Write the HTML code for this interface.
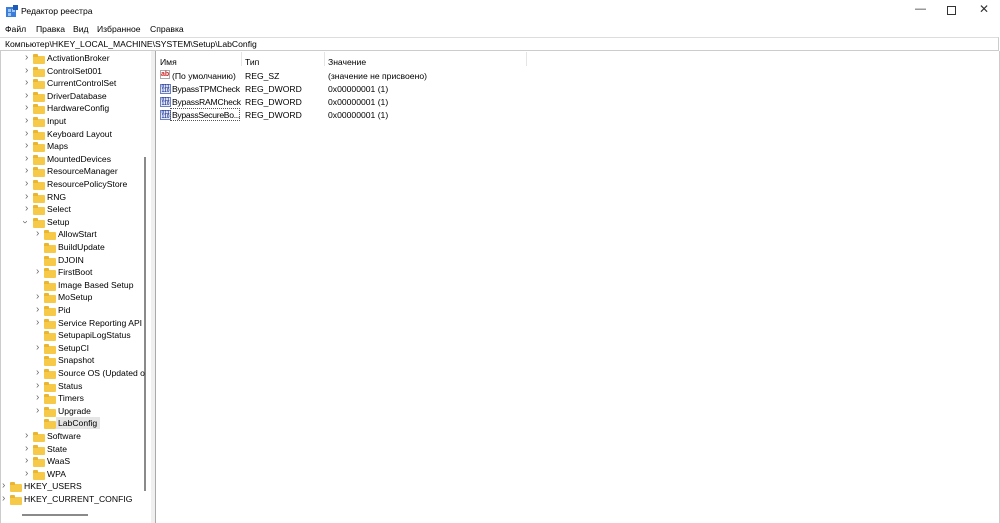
<!DOCTYPE html><html><head><meta charset="utf-8"><style>
body{margin:0;width:1000px;height:523px;background:#fff;font-family:"Liberation Sans",sans-serif;font-size:8.6px;color:#000;position:relative;overflow:hidden}
.a{position:absolute;white-space:nowrap}
.f{position:absolute;width:12px;height:8px;background:#f7c948;border-radius:1px}
.f:before{content:"";position:absolute;left:0;top:-2px;width:5px;height:3px;background:#eab530;border-radius:1px 1px 0 0}
.c{position:absolute;font-size:10px;line-height:10px;color:#666}
.ic{position:absolute;width:11px;height:10px;border:1px solid #6b7fc4;background:#e8ecf8;box-sizing:border-box;font-size:5px;line-height:4px;color:#2a3fa0;font-weight:bold;text-align:center}
</style></head><body>
<svg class="a" style="left:6px;top:5px" width="12" height="12"><rect x="0" y="2" width="10" height="10" fill="#3b7dd8"/><rect x="2" y="4" width="3" height="3" fill="#9cc6f2"/><rect x="6" y="4" width="3" height="3" fill="#9cc6f2"/><rect x="2" y="8" width="3" height="3" fill="#9cc6f2"/><rect x="7" y="0" width="5" height="5" fill="#1e5bb8"/></svg>
<div class="a" style="left:21px;top:6px">Редактор реестра</div>
<div class="a" style="left:915px;top:3px;font-size:11px;color:#333">—</div>
<div class="a" style="left:947px;top:6px;width:7px;height:7px;border:1px solid #333"></div>
<div class="a" style="left:979px;top:2px;font-size:12px;color:#333">✕</div>
<div class="a" style="left:5px;top:24px">Файл</div>
<div class="a" style="left:36px;top:24px">Правка</div>
<div class="a" style="left:73px;top:24px">Вид</div>
<div class="a" style="left:97px;top:24px">Избранное</div>
<div class="a" style="left:150px;top:24px">Справка</div>
<div class="a" style="left:0;top:37px;width:998px;height:12px;border-top:1px solid #ddd;border-bottom:1px solid #ccc;border-right:1px solid #ccc"></div>
<div class="a" style="left:5px;top:39px">Компьютер\HKEY_LOCAL_MACHINE\SYSTEM\Setup\LabConfig</div>
<div class="a" style="left:0;top:51px;width:150px;height:472px;border-right:1px solid #aaa;border-left:1px solid #ccc"></div>
<div class="a" style="left:151px;top:51px;width:4px;height:472px;background:#f0f0f0"></div>
<div class="a" style="left:155px;top:51px;width:843px;height:472px;border-left:1px solid #aaa;border-right:1px solid #ccc"></div>
<div class="a" style="left:144px;top:157px;width:2px;height:334px;background:#8a8a8a"></div>
<div class="a" style="left:22px;top:514px;width:66px;height:2px;background:#8a8a8a"></div>
<div class="a" style="left:56px;top:417px;width:44px;height:12px;background:#e5e5e5"></div>
<div id="tree"></div>
<div class="a" style="left:160px;top:57px">Имя</div>
<div class="a" style="left:245px;top:57px">Тип</div>
<div class="a" style="left:328px;top:57px">Значение</div>
<div class="a" style="left:241px;top:52px;width:1px;height:14px;background:#e5e5e5"></div>
<div class="a" style="left:324px;top:52px;width:1px;height:14px;background:#e5e5e5"></div>
<div class="a" style="left:526px;top:52px;width:1px;height:14px;background:#e5e5e5"></div>
<div class="a" style="left:160px;top:70px;width:10px;height:9px;border:1px solid #aaa;background:#fff;font-size:7px;line-height:8px;color:#c22;font-weight:bold;box-sizing:border-box;text-align:center">ab</div>
<div class="a" style="left:172px;top:71px">(По умолчанию)</div><div class="a" style="left:245px;top:71px">REG_SZ</div><div class="a" style="left:328px;top:71px">(значение не присвоено)</div>
<div class="ic" style="left:160px;top:84px">011<br>110</div><div class="a" style="left:172px;top:84px;letter-spacing:-0.2px">BypassTPMCheck</div><div class="a" style="left:245px;top:84px">REG_DWORD</div><div class="a" style="left:328px;top:84px">0x00000001 (1)</div>
<div class="ic" style="left:160px;top:97px">011<br>110</div><div class="a" style="left:172px;top:97px;letter-spacing:-0.2px">BypassRAMCheck</div><div class="a" style="left:245px;top:97px">REG_DWORD</div><div class="a" style="left:328px;top:97px">0x00000001 (1)</div>
<div class="ic" style="left:160px;top:110px">011<br>110</div><div class="a" style="left:170px;top:108px;width:70px;height:13px;border:1px dotted #555;box-sizing:border-box"></div><div class="a" style="left:172px;top:110px;letter-spacing:-0.3px">BypassSecureBo...</div><div class="a" style="left:245px;top:110px">REG_DWORD</div><div class="a" style="left:328px;top:110px">0x00000001 (1)</div>
<script>
var r=[[1,1,"ActivationBroker"],[1,1,"ControlSet001"],[1,1,"CurrentControlSet"],[1,1,"DriverDatabase"],[1,1,"HardwareConfig"],[1,1,"Input"],[1,1,"Keyboard Layout"],[1,1,"Maps"],[1,1,"MountedDevices"],[1,1,"ResourceManager"],[1,1,"ResourcePolicyStore"],[1,1,"RNG"],[1,1,"Select"],[1,2,"Setup"],[2,1,"AllowStart"],[2,0,"BuildUpdate"],[2,0,"DJOIN"],[2,1,"FirstBoot"],[2,0,"Image Based Setup"],[2,1,"MoSetup"],[2,1,"Pid"],[2,1,"Service Reporting API"],[2,0,"SetupapiLogStatus"],[2,1,"SetupCI"],[2,0,"Snapshot"],[2,1,"Source OS (Updated o"],[2,1,"Status"],[2,1,"Timers"],[2,1,"Upgrade"],[2,0,"LabConfig"],[1,1,"Software"],[1,1,"State"],[1,1,"WaaS"],[1,1,"WPA"],[0,1,"HKEY_USERS"],[0,1,"HKEY_CURRENT_CONFIG"]];
var h="";r.forEach(function(e,i){var y=52+i*12.6;var fx=e[0]==0?10:e[0]==1?33:44;
if(e[1]==1)h+='<div class="c" style="left:'+(fx-8)+'px;top:'+(y+1)+'px">&#x203A;</div>';
if(e[1]==2)h+='<div class="c" style="left:'+(fx-10)+'px;top:'+(y+1)+'px;transform:rotate(90deg)">&#x203A;</div>';
h+='<div class="f" style="left:'+fx+'px;top:'+(y+4)+'px"></div><div class="a" style="left:'+(fx+14)+'px;top:'+(y+1)+'px">'+e[2]+'</div>';});
document.getElementById("tree").innerHTML=h;
</script>
</body></html>
